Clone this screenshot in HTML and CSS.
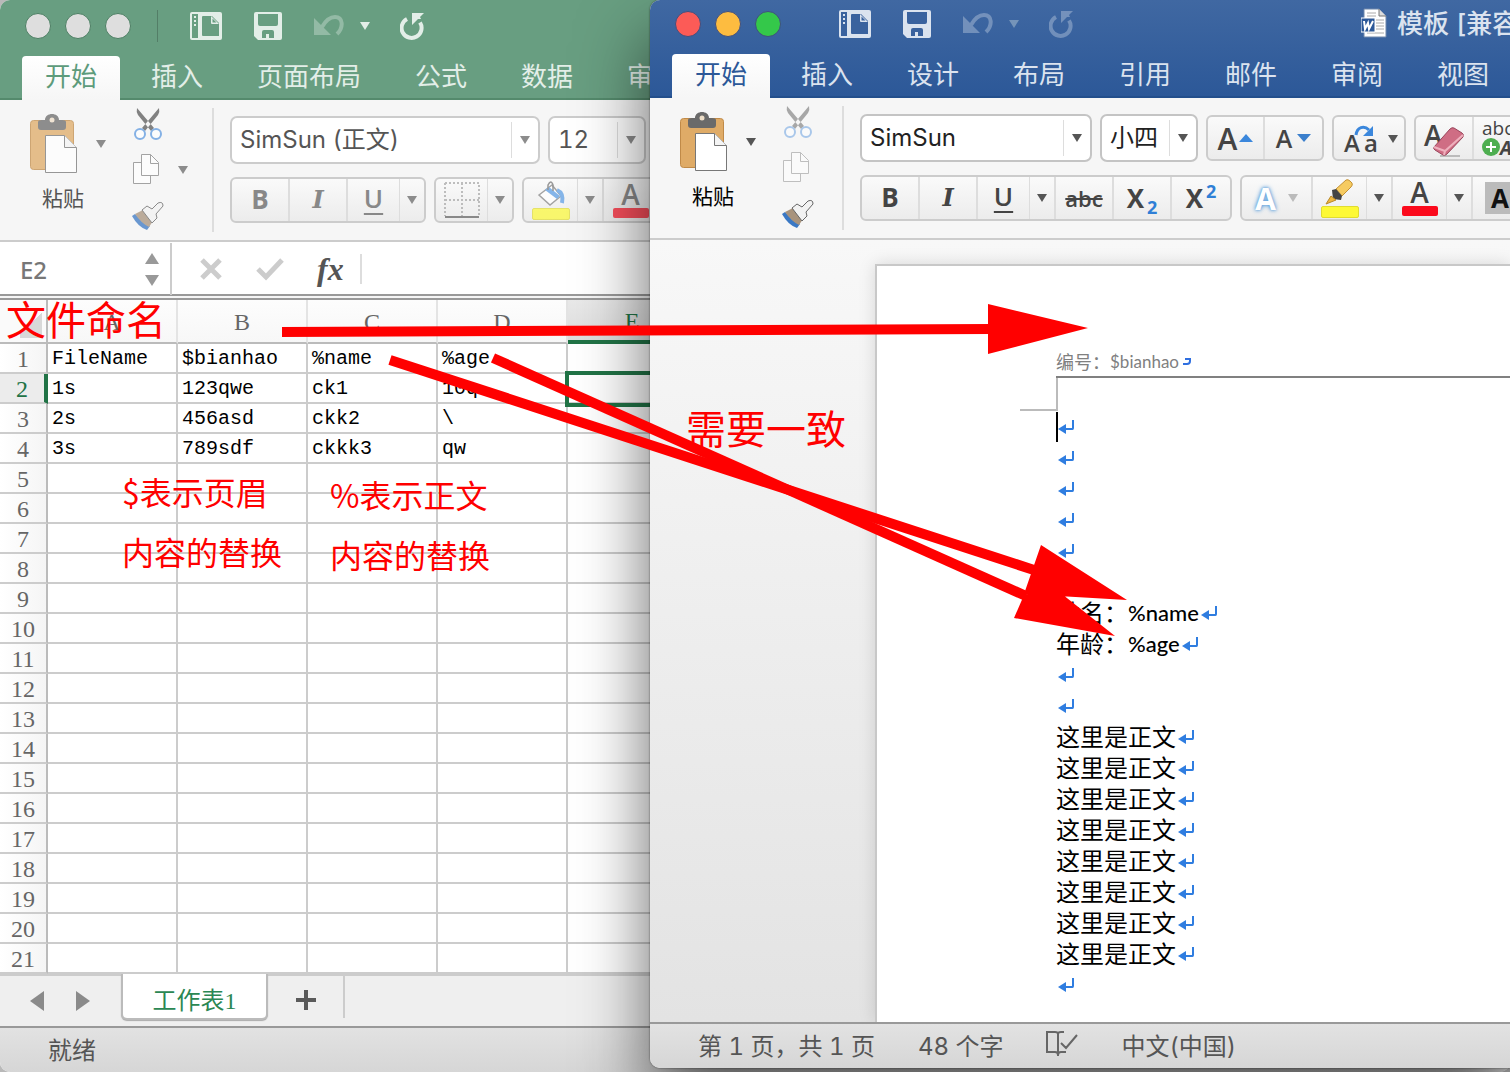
FILE: index.html
```html
<!DOCTYPE html>
<html lang="zh-CN">
<head>
<meta charset="utf-8">
<title>模板</title>
<link rel="stylesheet" href="styles.css">
</head>
<body>
<svg class="sprite" aria-hidden="true">
  <symbol id="i-layout" viewBox="0 0 32 28">
    <rect width="32" height="28" rx="2" fill="currentColor"/>
    <path d="M2 2h6v24H2z" class="cut"/>
    <path d="M4 4h2v2H4zM4 8h2v2H4zM4 12h2v2H4z" fill="currentColor"/>
    <path d="M13 4h9l7 7v13H13q-1 0-1-1V5q0-1 1-1z" class="cut"/>
    <path d="M21 4l8 8h-7q-1 0-1-1z" fill="currentColor"/><path d="M22.500 6.500l4 4h-4z" class="cut"/>
  </symbol>
  <symbol id="i-save" viewBox="0 0 28 28">
    <path d="M2 0h24q2 0 2 2v24q0 2-2 2H4l-4-4V2q0-2 2-2z" fill="currentColor"/>
    <path d="M4 2h20v10q0 2-2 2H6q-2 0-2-2zM8 20q0-2 2-2h8q2 0 2 2v6h-5v-4h-3v4H8z" class="cut"/>
  </symbol>
  <symbol id="i-undo" viewBox="0 0 30 22">
    <path d="M0 3v17h17z" fill="currentColor"/>
    <path d="M8 12C12 5 17 2 21 2c8 0 9 10 2 17" fill="none" stroke="currentColor" stroke-width="4"/>
  </symbol>
  <symbol id="i-redo" viewBox="0 0 24 28">
    <path d="M12 1h12l-4 4 1 2-3 0-6 6z" fill="currentColor"/>
    <path d="M7 7A10 10 0 1 0 20 10.500" fill="none" stroke="currentColor" stroke-width="4"/>
  </symbol>
  <symbol id="i-paste" viewBox="0 0 48 60">
    <rect x=".5" y="6.500" width="43" height="49" rx="3" fill="#dfab67" stroke="#c08a48"/>
    <path d="M8 8q0-2 4-2h3c0-8 14-8 14 0h3q4 0 4 2v5q0 3-3 3H11q-3 0-3-3z" fill="#6a6a6a"/>
    <circle cx="22" cy="6" r="2.500" fill="#eedfc9"/>
    <path d="M15.500 21.500h19l12 12v25h-31z" fill="#fff" stroke="#777"/>
    <path d="M34.500 21.500v12h12" fill="#f4f4f4" stroke="#777"/>
  </symbol>
  <symbol id="i-cut" viewBox="0 0 32 32">
    <path d="M5 0q-1 4 1 7l13 16 3-3zM27 0q1 4-1 7L13 23l-3-3z" fill="#5a5a5a"/>
    <circle cx="8" cy="26" r="5" fill="#fff" stroke="#5f9ae0" stroke-width="2"/>
    <circle cx="24" cy="26" r="5" fill="#fff" stroke="#5f9ae0" stroke-width="2"/>
  </symbol>
  <symbol id="i-copy" viewBox="0 0 32 32">
    <path d="M1.500 8.500h17v21h-17z" fill="#fff" stroke="#888"/>
    <path d="M9.500.5h9l8 8v13h-17z" fill="#fff" stroke="#888"/>
    <path d="M18.500.5v9h8" fill="none" stroke="#888"/>
  </symbol>
  <symbol id="i-brush" viewBox="0 0 32 32">
    <path d="M0 16l3-2 15 12-3 4q-9-3-15-14z" fill="#3a78c4"/>
    <path d="M3 14l8-4 10 11-4 6q-8-4-14-13z" fill="#a8937c"/>
    <path d="M10 10l5-4 5 3 6-6q5-2 5 3l-7 8 1 4-5 5z" fill="#f2f2f2" stroke="#666"/>
  </symbol>
  <symbol id="i-bucket" viewBox="0 0 32 26">
    <path d="M4 14L17 4l9 11-11 9z" fill="#fff" stroke="#888" stroke-width="1.500"/>
    <path d="M10 9l12 9 3-3L14 6z" fill="#5f9fe4"/><path d="M22 9q7 3 5 13" fill="none" stroke="#5f9fe4" stroke-width="4"/>
    <path d="M13 9V4q3-6 5 0v6" fill="none" stroke="#777" stroke-width="1.500"/>
  </symbol>
  <symbol id="i-marker" viewBox="0 0 30 26">
    <path d="M11 10L21 1q2-1 4 1l2 2q1 2-1 4L17 17z" fill="#f6cb61" stroke="#c49235"/>
    <path d="M7 11l4-1 6 7-1 4-8-1z" fill="#444"/><path d="M6 17l5 4-10 4z" fill="#f0b740" stroke="#b98928"/>
  </symbol>
  <symbol id="i-mark" viewBox="0 0 16 14">
    <path d="M0 9l8-5v10z" fill="#2f7de0"/><path d="M7 9h7.500q.5 0 .5-1V0" fill="none" stroke="#2f7de0" stroke-width="2"/>
  </symbol>
</svg>

<main class="desktop">
  <section class="window excel">
    <header class="bar">
      <div class="titlebar">
        <div class="lights"><i></i><i></i><i></i></div>
        <span class="sep"></span>
        <button class="tool" aria-label="布局"><svg width="32" height="28"><use href="#i-layout"/></svg></button>
        <button class="tool" aria-label="保存"><svg width="28" height="28"><use href="#i-save"/></svg></button>
        <button class="tool undo dim" aria-label="撤销"><svg width="30" height="22"><use href="#i-undo"/></svg></button>
        <button class="tool more" aria-label="更多撤销"><span class="caret"></span></button>
        <button class="tool" aria-label="恢复"><svg width="24" height="28"><use href="#i-redo"/></svg></button>
      </div>
      <nav class="tabs">
        <a class="on" href="#home">开始</a><a href="#insert">插入</a><a href="#page">页面布局</a><a href="#formula">公式</a><a href="#data">数据</a><a href="#review">审阅</a>
      </nav>
    </header>
    <div class="ribbon">
      <div class="clip">
        <button class="paste"><svg width="48" height="60"><use href="#i-paste"/></svg><span class="caret"></span><span class="label">粘贴</span></button>
        <div class="edit">
          <button aria-label="剪切"><svg width="32" height="32"><use href="#i-cut"/></svg></button>
          <button aria-label="复制"><svg width="32" height="32"><use href="#i-copy"/></svg><span class="caret"></span></button>
          <button aria-label="格式刷"><svg width="32" height="32"><use href="#i-brush"/></svg></button>
        </div>
      </div>
      <div class="fonts">
        <div class="line">
          <span class="combo wide"><select aria-label="字体"><option>SimSun (正文)</option></select></span>
          <span class="combo"><select aria-label="字号"><option>12</option></select></span>
        </div>
        <div class="line">
          <div class="group"><button class="b">B</button><button class="i">I</button><button class="u split">U</button><button class="drop" aria-label="下划线样式"><span class="caret"></span></button></div>
          <div class="group"><button class="split" aria-label="边框"><svg width="36" height="36"><path d="M1 1h34v33M1 1v33M18 1v33M1 18h34" fill="none" stroke="#aaa" stroke-width="2" stroke-dasharray="2 2"/><path d="M1 35h34" stroke="#666" stroke-width="2"/></svg></button><button class="drop" aria-label="边框样式"><span class="caret"></span></button></div>
          <div class="group"><button class="split ink yellow" aria-label="填充"><svg width="32" height="26"><use href="#i-bucket"/></svg></button><button class="drop end" aria-label="填充颜色"><span class="caret"></span></button><button class="split ink red">A</button><button class="drop" aria-label="字体颜色"><span class="caret"></span></button></div>
        </div>
      </div>
    </div>
    <div class="formula">
      <label class="namebox"><input value="E2" aria-label="名称框"><span class="spin"><i class="up"></i><i class="down"></i></span></label>
      <button aria-label="取消"><svg width="24" height="24"><path d="M3 3l18 18M21 3L3 21" stroke="#ccc" stroke-width="5"/></svg></button>
      <button aria-label="输入"><svg width="28" height="24"><path d="M2 12l8 8L26 3" fill="none" stroke="#ccc" stroke-width="5"/></svg></button>
      <button class="fx">fx</button>
      <span class="sep"></span>
    </div>
    <div class="sheet">
      <table>
        <colgroup><col class="num"><col><col><col><col><col></colgroup>
        <thead><tr><th class="corner"></th><th>A</th><th>B</th><th>C</th><th>D</th><th class="sel">E</th></tr></thead>
        <tbody>
          <tr><th>1</th><td>FileName</td><td>$bianhao</td><td>%name</td><td>%age</td><td></td></tr>
          <tr><th class="sel">2</th><td>1s</td><td>123qwe</td><td>ck1</td><td>10q</td><td class="active"></td></tr>
          <tr><th>3</th><td>2s</td><td>456asd</td><td>ckk2</td><td>\</td><td></td></tr>
          <tr><th>4</th><td>3s</td><td>789sdf</td><td>ckkk3</td><td>qw</td><td></td></tr>
          <tr><th>5</th><td></td><td></td><td></td><td></td><td></td></tr>
          <tr><th>6</th><td></td><td></td><td></td><td></td><td></td></tr>
          <tr><th>7</th><td></td><td></td><td></td><td></td><td></td></tr>
          <tr><th>8</th><td></td><td></td><td></td><td></td><td></td></tr>
          <tr><th>9</th><td></td><td></td><td></td><td></td><td></td></tr>
          <tr><th>10</th><td></td><td></td><td></td><td></td><td></td></tr>
          <tr><th>11</th><td></td><td></td><td></td><td></td><td></td></tr>
          <tr><th>12</th><td></td><td></td><td></td><td></td><td></td></tr>
          <tr><th>13</th><td></td><td></td><td></td><td></td><td></td></tr>
          <tr><th>14</th><td></td><td></td><td></td><td></td><td></td></tr>
          <tr><th>15</th><td></td><td></td><td></td><td></td><td></td></tr>
          <tr><th>16</th><td></td><td></td><td></td><td></td><td></td></tr>
          <tr><th>17</th><td></td><td></td><td></td><td></td><td></td></tr>
          <tr><th>18</th><td></td><td></td><td></td><td></td><td></td></tr>
          <tr><th>19</th><td></td><td></td><td></td><td></td><td></td></tr>
          <tr><th>20</th><td></td><td></td><td></td><td></td><td></td></tr>
          <tr><th>21</th><td></td><td></td><td></td><td></td><td></td></tr>
        </tbody>
      </table>
    </div>
    <div class="sheets">
      <button aria-label="上一个"><svg width="16" height="22"><path d="M15 1v20L1 11z" fill="#8a8a8a"/></svg></button>
      <button aria-label="下一个"><svg width="16" height="22"><path d="M1 1v20l14-10z" fill="#8a8a8a"/></svg></button>
      <a class="sheet-tab" href="#sheet1">工作表1</a>
      <button class="add" aria-label="新建工作表"><svg width="20" height="20"><path d="M10 0v20M0 10h20" stroke="#5a5a5a" stroke-width="4"/></svg></button>
    </div>
    <footer class="status">就绪</footer>
  </section>

  <section class="window word">
    <header class="bar">
      <div class="titlebar">
        <div class="lights"><i class="close"></i><i class="min"></i><i class="max"></i></div>
        <span class="sep"></span>
        <button class="tool" aria-label="布局"><svg width="32" height="28"><use href="#i-layout"/></svg></button>
        <button class="tool" aria-label="保存"><svg width="28" height="28"><use href="#i-save"/></svg></button>
        <button class="tool undo dim" aria-label="撤销"><svg width="30" height="22"><use href="#i-undo"/></svg></button>
        <button class="tool more dim" aria-label="更多撤销"><span class="caret"></span></button>
        <button class="tool dim" aria-label="恢复"><svg width="24" height="28"><use href="#i-redo"/></svg></button>
        <h1><svg width="26" height="30"><path d="M3 1h15l7 7v21H3z" fill="#fff" stroke="#6f87ab"/><path d="M18 1v7h7" fill="#ddd" stroke="#777"/><path d="M6 5h9M6 8h9M15 12h8M15 15h8M15 18h8M15 21h8M6 25h17" stroke="#aaa"/><path d="M0 10h14v14H0z" fill="#2c5898" stroke="#fff"/><path d="M3 13l1 8 3-6 1 6 4-8" fill="none" stroke="#fff" stroke-width="2"/></svg>模板 [兼容</h1>
      </div>
      <nav class="tabs">
        <a class="on" href="#w-home">开始</a><a href="#w-insert">插入</a><a href="#w-design">设计</a><a href="#w-layout">布局</a><a href="#w-ref">引用</a><a href="#w-mail">邮件</a><a href="#w-review">审阅</a><a href="#w-view">视图</a>
      </nav>
    </header>
    <div class="ribbon">
      <div class="clip">
        <button class="paste"><svg width="48" height="60"><use href="#i-paste"/></svg><span class="caret"></span><span class="label">粘贴</span></button>
        <div class="edit">
          <button class="off" aria-label="剪切"><svg width="32" height="32"><use href="#i-cut"/></svg></button>
          <button class="off" aria-label="复制"><svg width="32" height="32"><use href="#i-copy"/></svg></button>
          <button aria-label="格式刷"><svg width="32" height="32"><use href="#i-brush"/></svg></button>
        </div>
      </div>
      <div class="fonts">
        <div class="line">
          <span class="combo mid"><select aria-label="字体"><option>SimSun</option></select></span>
          <span class="combo"><select aria-label="字号"><option>小四</option></select></span>
          <div class="group"><button class="grow">A<svg width="14" height="8"><path d="M7 0l7 8H0z" fill="#3b87dc"/></svg></button><button class="grow less">A<svg width="14" height="8"><path d="M7 8l7-8H0z" fill="#3b7fcc"/></svg></button></div>
          <div class="group"><button class="case"><span>A</span><span>a</span><svg width="20" height="12"><path d="M2 10C3 2 10 0 15 5" fill="none" stroke="#3b87dc" stroke-width="3"/><path d="M19 1v10H9z" fill="#3b87dc"/></svg><i class="caret"></i></button></div>
          <div class="group"><button class="clear"><span>A</span><svg width="32" height="32"><path d="M8 31h20" stroke="#bbb" stroke-width="2"/><path d="M2 22L18 4q2-2 4-1l8 5q2 1 1 4L15 29q-2 2-4 1l-8-5q-2-1-1-3z" fill="#cf6d84" stroke="#99455b"/><path d="M2 22l11 4 18-16M13 26l-1 4" fill="none" stroke="#eeb0bd" stroke-width="2"/></svg></button><button class="abc"><span>abc</span><span class="plus"><svg width="18" height="18"><circle cx="9" cy="9" r="9" fill="#4eae50"/><path d="M9 4v10M4 9h10" stroke="#fff" stroke-width="2"/></svg>A</span></button></div>
        </div>
        <div class="line">
          <div class="group"><button class="b">B</button><button class="i">I</button><button class="u split">U</button><button class="drop end" aria-label="下划线样式"><span class="caret"></span></button><button class="strike">abc</button><button class="x"><span>X<sub>2</sub></span></button><button class="x"><span>X<sup>2</sup></span></button></div>
          <div class="group"><button class="fxa"><span>A</span><i class="caret"></i></button><button class="split ink yellow" aria-label="突出显示"><svg width="30" height="26"><use href="#i-marker"/></svg></button><button class="drop end" aria-label="突出显示颜色"><span class="caret"></span></button><button class="split ink red">A</button><button class="drop end" aria-label="字体颜色"><span class="caret"></span></button><button class="shade"><span>A</span></button></div>
        </div>
      </div>
    </div>
    <div class="canvas">
      <article class="page">
        <p class="head">编号：<span>$bianhao</span><svg width="8" height="8"><path d="M2 1h5v2q0 3-3 3H0" fill="none" stroke="#2f6fe0" stroke-width="2"/></svg></p>
        <div class="body">
          <p class="cursor"><svg class="mark"><use href="#i-mark"/></svg></p>
          <p><svg class="mark"><use href="#i-mark"/></svg></p>
          <p><svg class="mark"><use href="#i-mark"/></svg></p>
          <p><svg class="mark"><use href="#i-mark"/></svg></p>
          <p><svg class="mark"><use href="#i-mark"/></svg></p>
          <p><svg class="mark"><use href="#i-mark"/></svg></p>
          <p>姓名：<span>%name</span><svg class="mark"><use href="#i-mark"/></svg></p>
          <p>年龄：<span>%age</span><svg class="mark"><use href="#i-mark"/></svg></p>
          <p><svg class="mark"><use href="#i-mark"/></svg></p>
          <p><svg class="mark"><use href="#i-mark"/></svg></p>
          <p>这里是正文<svg class="mark"><use href="#i-mark"/></svg></p>
          <p>这里是正文<svg class="mark"><use href="#i-mark"/></svg></p>
          <p>这里是正文<svg class="mark"><use href="#i-mark"/></svg></p>
          <p>这里是正文<svg class="mark"><use href="#i-mark"/></svg></p>
          <p>这里是正文<svg class="mark"><use href="#i-mark"/></svg></p>
          <p>这里是正文<svg class="mark"><use href="#i-mark"/></svg></p>
          <p>这里是正文<svg class="mark"><use href="#i-mark"/></svg></p>
          <p>这里是正文<svg class="mark"><use href="#i-mark"/></svg></p>
          <p><svg class="mark"><use href="#i-mark"/></svg></p>
        </div>
      </article>
    </div>
    <footer class="status"><span>第 1 页，共 1 页</span><span>48 个字</span><svg width="32" height="28"><path d="M12 3v23M18 2h-3q-3 0-3 2 0-2-3-2H1v20h8q3 0 3 3 0-3 3-3h5M15 13l5 5L31 5" fill="none" stroke="#666" stroke-width="2"/></svg><span>中文(中国)</span></footer>
  </section>

  <svg class="arrows" width="1140" height="660" aria-hidden="true">
    <g stroke="#f00" stroke-width="10"><path d="M282 332L990 329"/><path d="M390 360L1034 570"/><path d="M493 358L1026 596"/></g>
    <path d="M988 304l100 24-100 26zM1041 545l86 55-103-6zM1034 572l81 64-101-18z" fill="#f00"/>
  </svg>
  <p class="note large name">文件命名</p>
  <p class="note large match">需要一致</p>
  <p class="note header">$表示页眉<br>内容的替换</p>
  <p class="note content">%表示正文<br>内容的替换</p>
</main>
</body>
</html>
```
FILE: styles.css
```css
* { box-sizing: border-box; }
body { margin: 0; font-family: Inter, "Noto Sans CJK SC", sans-serif; font-variant-numeric: tabular-nums; color: #555; }
p, h1 { margin: 0; }
a { text-decoration: none; color: inherit; }
button, select, input { margin: 0; padding: 0; border: 0; background: none; color: inherit; font: inherit; }
svg { display: block; flex: none; }
.sprite { position: absolute; width: 0; height: 0; }

.desktop { position: relative; height: 100vh; overflow: hidden; background: #b9b9b9; }
.window { position: absolute; display: flex; flex-direction: column; overflow: hidden; }
.excel { inset: 0; border-radius: 10px; --bar: #689e81; --caret: #8c8c8c; background: #fff; }
.word { left: 650px; top: 0; right: 0; bottom: 4px; border-radius: 10px 0 0 10px; --bar: #3a629e; --caret: #555; background: #f6f6f6; box-shadow: 0 40px 70px rgba(0, 0, 0, .6), 0 0 2px rgba(0, 0, 0, .6); }
.cut { fill: var(--bar); }
.caret { display: block; flex: none; border: 5px solid transparent; border-top: 8px solid var(--caret); border-bottom: 0; }

/* title bar and tabs */
.bar { flex: none; color: #e3eee8; background: #689e81; border-bottom: 2px solid #548a6c; }
.word .bar { color: #dbe3ef; background: linear-gradient(#4068a2, #2c5898); border-color: #234f8c; }
.titlebar { display: flex; align-items: center; height: 56px; padding: 0 0 4px 25px; }
.word .titlebar { height: 54px; padding-bottom: 6px; }
.lights { display: flex; gap: 14px; }
.lights i { width: 26px; height: 26px; border-radius: 50%; background: #dedede; border: 1px solid #4c7f63; }
.lights .close { background: #fc5b57; border-color: #3f4f80; }
.lights .min { background: #fdbc40; border-color: #3f4f80; }
.lights .max { background: #34c84a; border-color: #3f4f80; }
.titlebar .sep { width: 1px; height: 32px; margin: 0 32px 0 26px; background: #0003; }
.tool { margin-right: 32px; }
.undo { margin-right: 16px; }
.more { margin-right: 30px; --caret: #e3eee8; }
.dim { opacity: .35; }
h1 { display: flex; gap: 10px; margin-left: 256px; font-size: 26px; line-height: 32px; font-weight: 500; white-space: nowrap; }
.tabs { display: flex; gap: 8px; padding-left: 22px; height: 42px; font-size: 26px; line-height: 42px; }
.tabs a { flex: none; height: 44px; padding: 0 23px; border-radius: 4px 4px 0 0; }
.tabs .on { color: #5d9b7b; background: linear-gradient(#fff, #f6f6f6); }
.word .tabs .on { color: #2c5898; }

/* ribbon */
.ribbon { display: flex; flex: none; height: 142px; padding-top: 8px; background: #f6f6f6; border-bottom: 2px solid #ccc; }
.clip { display: flex; flex: none; gap: 26px; width: 214px; height: 124px; padding-left: 30px; border-right: 2px solid #ddd; }
.word .clip { width: 194px; }
.paste { display: grid; grid-template-columns: 48px 28px; align-content: start; align-items: center; justify-items: end; row-gap: 10px; padding-top: 6px; }
.label { grid-column: 1 / 3; justify-self: start; padding-left: 12px; font-size: 21px; line-height: 30px; color: #555; }
.word .label { color: #000; }
.excel .ribbon svg { opacity: .75; }
.edit { display: flex; flex-direction: column; gap: 14px; align-items: flex-start; }
.edit button { display: flex; align-items: center; gap: 14px; }
.off { opacity: .5; }
.fonts { display: flex; flex-direction: column; gap: 13px; padding: 8px 0 0 16px; }
.line { display: flex; align-items: center; gap: 8px; }
.combo { position: relative; flex: none; width: 98px; height: 48px; background: #fff; border: 2px solid #ccc; border-radius: 7px; }
.wide { width: 310px; }
.mid { width: 232px; }
.combo select { appearance: none; width: 100%; height: 44px; padding-left: 8px; font-size: 24px; line-height: 42px; }
.word .combo { color: #222; border-color: #c4c4c4; }
.combo::before { content: ""; position: absolute; right: 26px; top: 4px; height: 36px; border-left: 1px solid #ddd; }
.combo::after { content: ""; position: absolute; right: 8px; top: 18px; border: 5px solid transparent; border-top: 8px solid var(--caret); border-bottom: 0; }
.group { display: flex; flex: none; height: 46px; border: 2px solid #ccc; border-radius: 6px; background: linear-gradient(#fafafa, #ececec); font-size: 26px; line-height: 38px; color: #888; overflow: hidden; }
.word .group { color: #444; }
.group button { display: flex; flex: none; align-items: center; justify-content: center; width: 58px; border-right: 2px solid #ddd; }
.group .split { width: 52px; border-right: 1px solid #ddd; }
.group .drop { width: 24px; border: 0; }
.group .drop.end { width: 26px; border-right: 2px solid #ddd; }
.group button:last-child { border: 0; }
.group .b { font-family: "Open Sans", sans-serif; font-weight: 700; padding-bottom: 2px; }
.group .i { font-family: "DejaVu Serif", serif; font-style: italic; font-weight: 700; font-size: 24px; }
.group .u { font-family: "Open Sans", sans-serif; font-weight: 600; padding-bottom: 4px; text-decoration: underline 2px; text-underline-offset: 5px; }
.group .ink { width: 54px; flex-direction: column; justify-content: flex-start; font-family: "Open Sans", sans-serif; font-weight: 600; font-size: 28px; line-height: 28px; padding-top: 1px; }
.ink svg { height: 28px; }
.ink::after { content: ""; width: 36px; height: 10px; border-radius: 2px; background: #fdf935; }
.red::after { background: #fb0a1c; }
.excel .ink::after { opacity: .7; }
.ink.yellow::after { border: 1px solid #e0dc30; }
.group .strike { font: 600 22px "Open Sans", sans-serif; text-decoration: line-through 2px; }
.group .x { font: 700 26px/38px "Open Sans", sans-serif; }
.x sub, .x sup { margin-left: 3px; font-size: 18px; line-height: 18px; color: #2f7fd6; }
.group .grow { gap: 2px; width: 57px; font: 600 30px "Open Sans", sans-serif; }
.group .less { gap: 5px; font-size: 25px; }
.group .case { position: relative; width: 70px; justify-content: flex-start; gap: 4px; padding: 8px 0 0 10px; font: 600 24px "Open Sans", sans-serif; }
.case svg { position: absolute; left: 20px; top: 8px; }
.case .caret { position: absolute; right: 6px; top: 18px; }
.group .clear { position: relative; }
.clear span { position: absolute; left: 8px; top: 2px; font: 600 28px/32px "Open Sans", sans-serif; }
.clear svg { position: absolute; left: 16px; top: 8px; }
.group .abc { flex-direction: column; align-items: flex-start; padding-left: 8px; font: 500 19px/20px "Open Sans", sans-serif; }
.plus { display: flex; font-style: italic; font-weight: 700; }
.group .fxa { width: 71px; gap: 12px; --caret: #bbb; font: 700 30px "Open Sans", sans-serif; }
.fxa span { color: #fff; text-shadow: 0 0 3px #5c9fdc, 0 0 5px #5c9fdc; }
.group .shade { justify-content: flex-start; padding-left: 12px; color: #111; font: 700 26px/32px "Open Sans", sans-serif; }
.shade span { padding: 0 6px; background: #bbb; }

/* formula bar */
.formula { display: flex; flex: none; align-items: center; height: 58px; padding-bottom: 4px; background: linear-gradient(#fff 52px, #999 52px 54px, #f6f6f6 54px 56px, #999 56px); }
.namebox { display: flex; align-items: center; width: 172px; height: 52px; padding: 0 11px 0 20px; border-right: 2px solid #ccc; }
.namebox input { flex: 1; min-width: 0; font-family: "Noto Sans", sans-serif; font-size: 24px; font-weight: 500; color: #777; }
.spin { display: grid; gap: 11px; }
.spin i { border: 7px solid transparent; }
.spin .up { border-top: 0; border-bottom: 11px solid #999; }
.spin .down { border-bottom: 0; border-top: 11px solid #999; }
.formula button { margin-left: 27px; }
.formula button + button { margin-left: 33px; }
.formula .fx { font: italic 700 32px/40px "Liberation Serif", serif; }
.formula .sep { width: 2px; height: 30px; margin-left: 16px; background: #ddd; }

/* sheet */
.sheet { flex: 1; min-height: 0; overflow: hidden; }
table { table-layout: fixed; width: 698px; border-collapse: separate; border-spacing: 0; color: #000; }
col { width: 130px; }
.num { width: 48px; }
td, th { height: 30px; padding: 2px 0 0 4px; border: solid #ccc; border-width: 0 2px 2px 0; text-align: left; }
td { font: 20px/26px "Liberation Mono", monospace; }
th { padding-left: 0; text-align: center; font: 24px/26px "Liberation Serif", serif; color: #666; background: linear-gradient(90deg, #fff, #f5f5f5); }
tbody th { border-right-color: #bbb; }
thead th { height: 44px; border-color: #e4e4e4 #e4e4e4 #bbb; background: linear-gradient(#fdfdfd, #f7f7f7); }
thead .corner { border-right-color: #bbb; background: linear-gradient(135deg, #fafafa 50%, #d8d8d8 50%) 20px 8px / 22px 30px no-repeat #fafafa; }
.sel { color: #217346; background: #ececec; }
thead .sel { border-bottom: 4px solid #217346; background: linear-gradient(#e9e9e9, #ddd); }
tbody .sel { border-right: 4px solid #217346; }
.active { outline: 4px solid #217346; outline-offset: -1px; }
.sheets { display: flex; flex: none; align-items: flex-start; height: 54px; background: #efefef; border-bottom: 2px solid #999; box-shadow: inset 0 2px #ccc; padding-left: 29px; }
.sheets button { margin: 16px 30px 0 0; }
.sheet-tab { width: 147px; height: 46px; background: #fff; border: solid #bbb; border-width: 0 2px 2px; border-radius: 0 0 6px 6px; color: #2b8753; font: 24px/54px "Liberation Serif", "Noto Sans CJK SC", serif; text-align: center; box-shadow: 0 1px 1px #aaa; }
.sheets .add { height: 44px; width: 77px; margin: 0; padding: 16px 0 12px 28px; border-right: 2px solid #ccc; }
.status { display: flex; flex: none; align-items: center; height: 44px; padding: 0 0 4px 48px; background: linear-gradient(#e2e2e2, #d6d6d6); font-size: 24px; }

/* document */
.canvas { display: flex; flex: 1; min-height: 0; padding: 24px 0 0 225px; background: linear-gradient(#f8f8f8, #e3e3e3); }
.page { flex: 1; padding: 82px 0 0 143px; overflow: hidden; background: #fff; border: solid #c8c8c8; border-width: 2px 0 0 2px; box-shadow: 0 0 16px #0002; }
.head { display: flex; align-items: center; height: 30px; margin-left: 36px; border-bottom: 2px solid #808080; color: #808080; font: 18px/28px "Lato", "Noto Sans CJK SC", sans-serif; }
.head span { font-size: 17px; margin-right: 4px; }
.body { color: #000; font: 24px/31px "Lato", "Noto Sans CJK SC", sans-serif; }
.body::before { content: ""; display: block; width: 36px; height: 31px; border: solid #bbb; border-width: 0 2px 2px 0; }
.body p { display: flex; align-items: center; height: 31px; padding-left: 36px; }
.body span { font-size: 22px; font-weight: 500; }
.cursor::before { content: ""; width: 2px; height: 30px; background: #000; }
.mark { width: 16px; height: 14px; margin-left: 2px; }
.cursor .mark { margin-left: 0; }
.word .status { height: 46px; gap: 43px; border-top: 2px solid #999; }

/* annotations over both windows */
.arrows { position: absolute; left: 0; top: 0; }
.note { position: absolute; color: #f00; font-size: 32px; line-height: 60px; white-space: nowrap; font-family: "Noto Sans CJK SC", sans-serif; }
.large { font-size: 40px; }
.name { left: 6px; top: 288px; }
.match { left: 686px; top: 397px; }
.header { left: 122px; top: 461px; }
.content { left: 330px; top: 464px; }
```
